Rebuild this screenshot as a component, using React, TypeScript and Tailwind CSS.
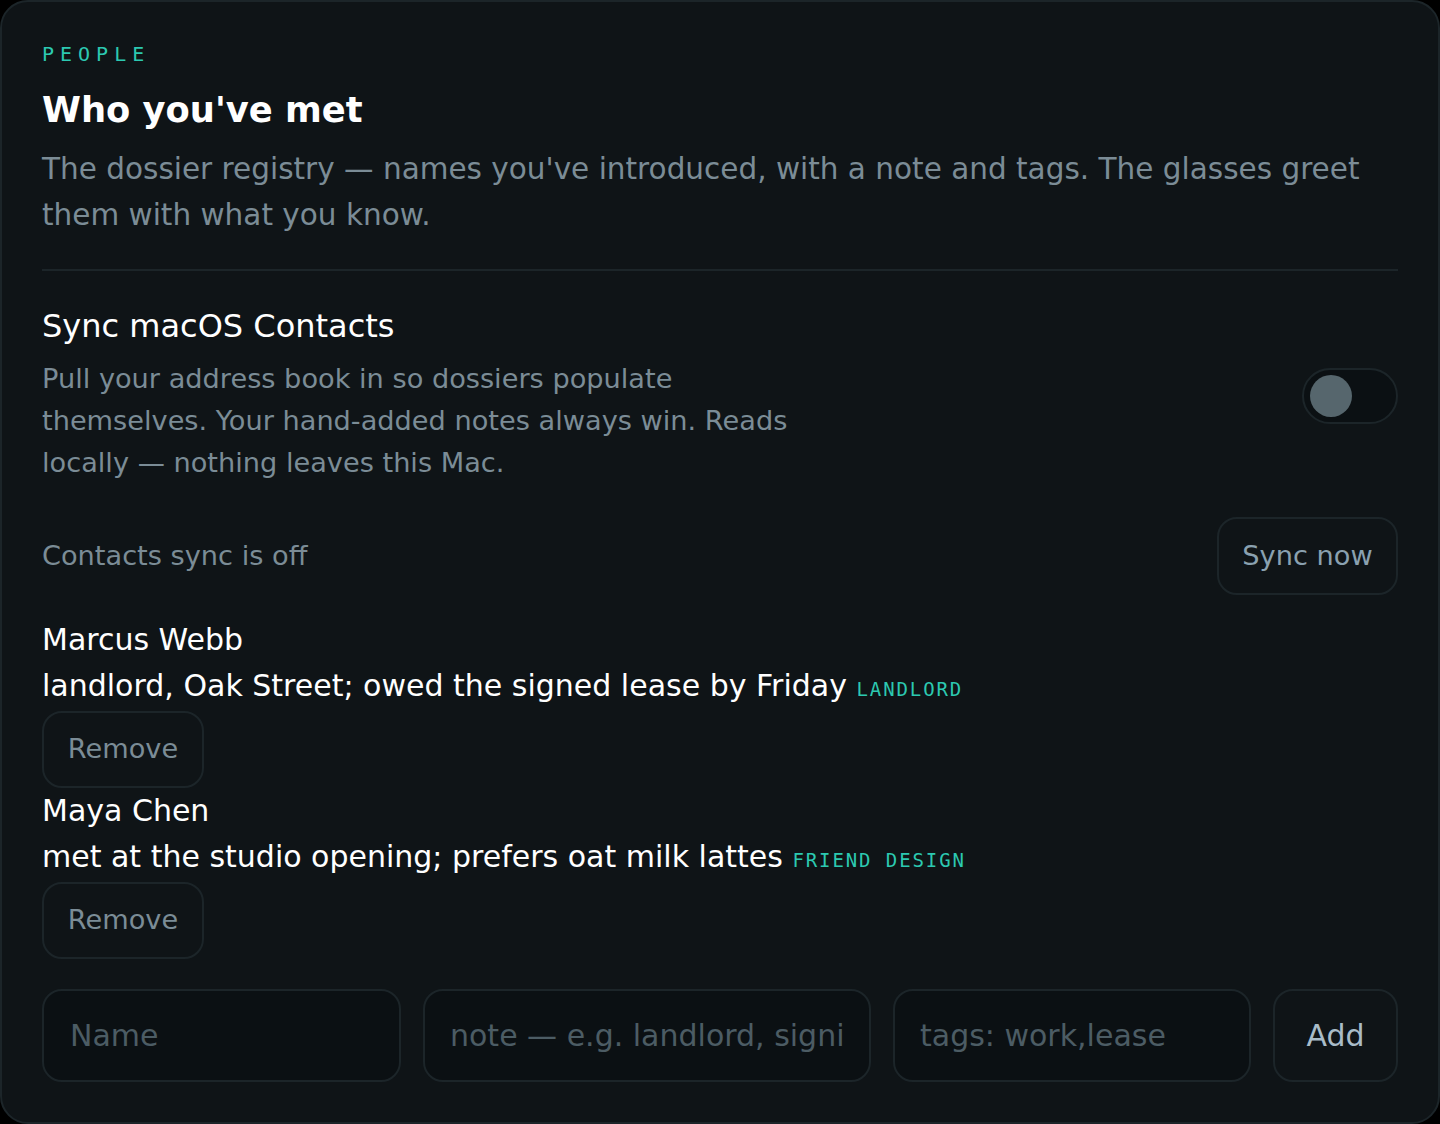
import { useState } from 'react'

type Person = { name: string; note: string; tags: string[] }

const people: Person[] = [
  { name: 'Marcus Webb', note: 'landlord, Oak Street; owed the signed lease by Friday', tags: ['landlord'] },
  { name: 'Maya Chen', note: 'met at the studio opening; prefers oat milk lattes', tags: ['friend', 'design'] },
]

const sans = "font-['DejaVu_Sans',sans-serif]"
const mono = "font-['DejaVu_Sans_Mono',monospace]"

const Toggle = ({ on, onChange }: { on: boolean; onChange: () => void }) => (
  <button
    onClick={onChange}
    className="mt-[4px] flex h-[56px] w-[96px] shrink-0 items-center rounded-full border-2 border-[#1c2529] bg-[#0b1013] px-[6px]"
  >
    <span className={`h-[42px] w-[42px] rounded-full bg-[#56666d] ${on ? 'ml-auto' : ''}`} />
  </button>
)

export default function App() {
  const [syncOn, setSyncOn] = useState(false)

  return (
    <div className={`min-h-screen bg-black ${sans}`}>
      <div className="min-h-[1124px] rounded-[28px] border-2 border-[#1c2529] bg-[#0f1417] px-[40px] pt-[36px] pb-[40px]">
        {/* Header */}
        <div className={`${mono} text-[20px] leading-[32px] tracking-[0.3em] text-[#2cc9b1]`}>PEOPLE</div>
        <h1 className="mt-[16px] text-[35.3px] font-bold leading-[48px] text-white">Who you've met</h1>
        <p className="mt-[12px] text-[29.5px] leading-[46px] text-[#7b8c96]">
          The dossier registry — names you've introduced, with a note and tags. The glasses greet them with what you
          know.
        </p>

        <div className="mt-[31px] h-[2px] bg-[#1c2529]" />

        {/* Contacts sync */}
        <div className="mt-[33px] flex items-center justify-between">
          <div>
            <div className="text-[32px] leading-[44px] text-white">Sync macOS Contacts</div>
            <p className="mt-[10px] max-w-[770px] text-[27.2px] leading-[42px] text-[#7b8c96]">
              Pull your address book in so dossiers populate themselves. Your hand-added notes always win. Reads
              locally — nothing leaves this Mac.
            </p>
          </div>
          <Toggle on={syncOn} onChange={() => setSyncOn(!syncOn)} />
        </div>

        <div className="mt-[33px] flex items-center justify-between">
          <span className="text-[27.2px] text-[#7b8c96]">Contacts sync is off</span>
          <button className="h-[78px] w-[181px] rounded-[20px] border-2 border-[#1c2529] text-[27.2px] text-[#8aa1b0]">
            Sync now
          </button>
        </div>

        {/* People list */}
        <div className="mt-[22px]">
          {people.map((p) => (
            <div key={p.name}>
              <div className="text-[30px] leading-[46px] text-white">{p.name}</div>
              <div className="text-[30px] leading-[46px] text-white">
                {p.note}{' '}
                <span className={`${mono} text-[19px] leading-none tracking-[0.1em] text-[#2cc9b1] uppercase`}>
                  {p.tags.join(' ')}
                </span>
              </div>
              <button className="mt-[2px] h-[77px] w-[162px] rounded-[20px] border-2 border-[#1c2529] text-[27.2px] text-[#7b8c96]">
                Remove
              </button>
            </div>
          ))}
        </div>

        {/* Add form */}
        <div className="mt-[30px] flex gap-[22px]">
          <input
            placeholder="Name"
            className="h-[93px] w-[359px] rounded-[20px] border-2 border-[#1c2529] bg-[#0b1013] px-[26px] text-[30px] text-white placeholder:text-[#4c5c64] outline-none"
          />
          <input
            placeholder="note — e.g. landlord, signing the lease"
            className="h-[93px] w-[448px] rounded-[20px] border-2 border-[#1c2529] bg-[#0b1013] px-[25px] text-[30px] text-white placeholder:text-[#4c5c64] outline-none"
          />
          <input
            placeholder="tags: work,lease"
            className="h-[93px] w-[358px] rounded-[20px] border-2 border-[#1c2529] bg-[#0b1013] px-[25px] text-[30px] text-white placeholder:text-[#4c5c64] outline-none"
          />
          <button className="h-[93px] flex-1 rounded-[20px] border-2 border-[#1c2529] text-[30px] text-[#a9bcc8]">
            Add
          </button>
        </div>
      </div>
    </div>
  )
}
